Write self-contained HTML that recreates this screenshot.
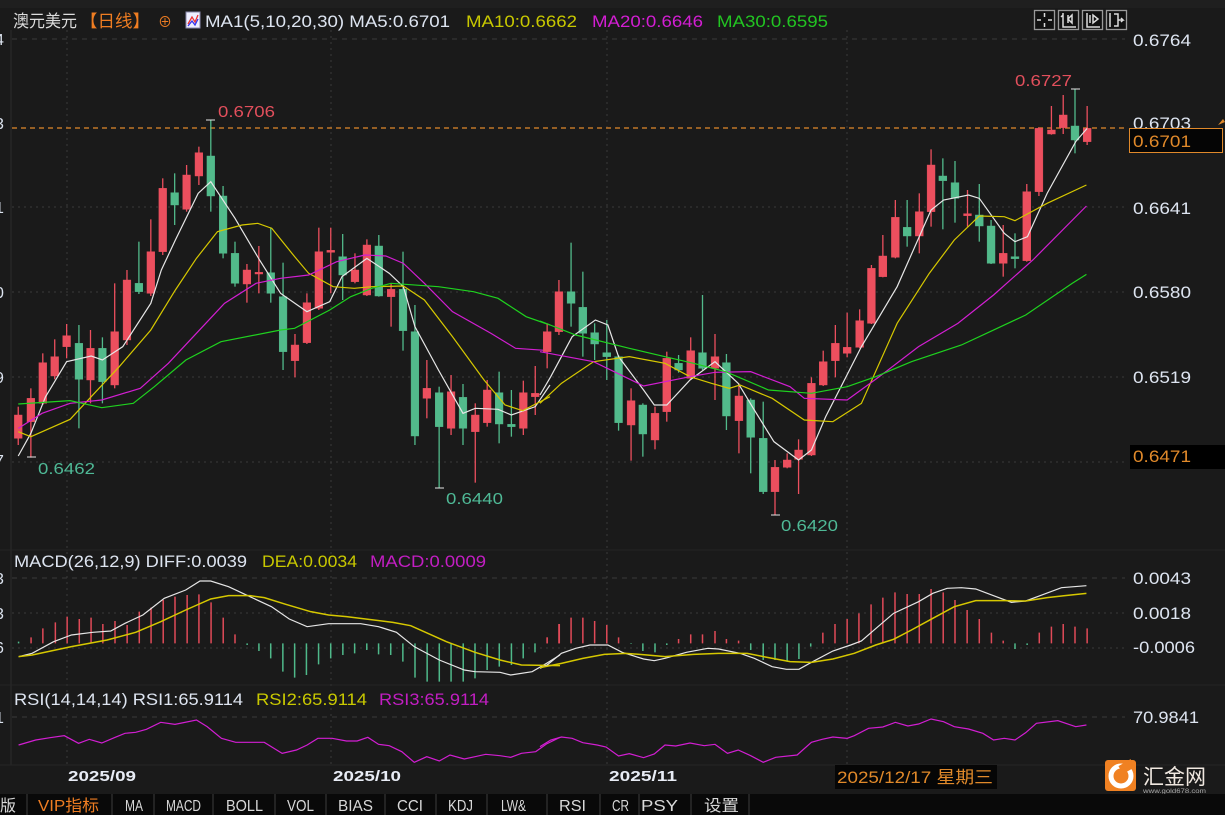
<!DOCTYPE html>
<html><head><meta charset="utf-8"><style>
html,body{margin:0;padding:0;background:#1a1a1a;width:1225px;height:815px;overflow:hidden}
svg{display:block}
text{font-family:"Liberation Sans","Noto Sans CJK SC",sans-serif}
.n{vector-effect:non-scaling-stroke}
</style></head><body>
<svg width="1225" height="815" viewBox="0 0 1225 815" xmlns="http://www.w3.org/2000/svg">
<rect width="1225" height="815" fill="#1a1a1a"/>
<rect x="0" y="0" width="1225" height="8" fill="#1f1f1f"/>
<!-- grid -->
<g stroke="#3a3a3a" stroke-dasharray="2,4" stroke-width="1">
<line x1="12" y1="39" x2="1125" y2="39" stroke-dasharray="5,5"/>
<line x1="12" y1="207" x2="1125" y2="207"/>
<line x1="12" y1="292" x2="1125" y2="292"/>
<line x1="12" y1="377" x2="1125" y2="377"/>
<line x1="12" y1="462" x2="1125" y2="462"/>
<line x1="12" y1="578" x2="1125" y2="578" stroke-dasharray="5,5"/>
<line x1="12" y1="613" x2="1125" y2="613"/>
<line x1="12" y1="648" x2="1125" y2="648"/>
<line x1="12" y1="717" x2="1125" y2="717" stroke-dasharray="5,5"/>
<line x1="67" y1="30" x2="67" y2="765"/>
<line x1="331" y1="30" x2="331" y2="765"/>
<line x1="607" y1="30" x2="607" y2="765"/>
<line x1="847" y1="30" x2="847" y2="765"/>
</g>
<line x1="11" y1="30" x2="11" y2="765" stroke="#2c2c2c"/>
<line x1="0" y1="550" x2="1225" y2="550" stroke="#242424"/>
<line x1="0" y1="685" x2="1225" y2="685" stroke="#242424"/>
<line x1="0" y1="765" x2="1225" y2="765" stroke="#262626"/>
<line x1="12" y1="128" x2="1128" y2="128" stroke="#e0892a" stroke-dasharray="5,4" stroke-width="1.3"/>

<!-- left half candles (zoom5 coords) -->
<g transform="translate(0,140) scale(0.35075,0.33333)">
<g stroke="#ec4f5e" fill="#ec4f5e" stroke-width="1.3">
<line class="n" x1="52" y1="800" x2="52" y2="915"/><rect x="41" y="825" width="22" height="70"/>
<line class="n" x1="88" y1="745" x2="88" y2="953"/><rect x="77" y="775" width="22" height="70"/>
<line class="n" x1="122" y1="640" x2="122" y2="795"/><rect x="111" y="668" width="22" height="122"/>
<line class="n" x1="156" y1="598" x2="156" y2="718"/><rect x="145" y="650" width="22" height="58"/>
<line class="n" x1="190" y1="552" x2="190" y2="655"/><rect x="179" y="587" width="22" height="33"/>
<line class="n" x1="258" y1="570" x2="258" y2="790"/><rect x="247" y="625" width="22" height="95"/>
<line class="n" x1="327" y1="430" x2="327" y2="745"/><rect x="316" y="575" width="22" height="160"/>
<line class="n" x1="362" y1="390" x2="362" y2="615"/><rect x="351" y="420" width="22" height="180"/>
<line class="n" x1="430" y1="238" x2="430" y2="468"/><rect x="419" y="335" width="22" height="125"/>
<line class="n" x1="464" y1="115" x2="464" y2="345"/><rect x="453" y="145" width="22" height="190"/>
<line class="n" x1="532" y1="75" x2="532" y2="215"/><rect x="521" y="105" width="22" height="103"/>
<line class="n" x1="567" y1="20" x2="567" y2="135"/><rect x="556" y="38" width="22" height="70"/>
<line class="n" x1="704" y1="372" x2="704" y2="488"/><rect x="693" y="390" width="22" height="42"/>
<line class="n" x1="738" y1="318" x2="738" y2="460"/><rect x="727" y="397" width="22" height="5"/>
<line class="n" x1="841" y1="582" x2="841" y2="712"/><rect x="830" y="615" width="22" height="47"/>
<line class="n" x1="875" y1="460" x2="875" y2="612"/><rect x="864" y="488" width="22" height="120"/>
<line class="n" x1="909" y1="263" x2="909" y2="510"/><rect x="898" y="335" width="22" height="170"/>
<line class="n" x1="943" y1="263" x2="943" y2="460"/><rect x="932" y="331" width="22" height="6"/>
<line class="n" x1="1012" y1="340" x2="1012" y2="430"/><rect x="1001" y="390" width="22" height="35"/>
<line class="n" x1="1046" y1="298" x2="1046" y2="468"/><rect x="1035" y="315" width="22" height="150"/>
<line class="n" x1="1115" y1="430" x2="1115" y2="560"/><rect x="1104" y="448" width="22" height="22"/>
<line class="n" x1="1217" y1="660" x2="1217" y2="835"/><rect x="1206" y="745" width="22" height="30"/>
<line class="n" x1="1286" y1="705" x2="1286" y2="885"/><rect x="1275" y="755" width="22" height="110"/>
<line class="n" x1="1355" y1="790" x2="1355" y2="1028"/><rect x="1344" y="825" width="22" height="50"/>
<line class="n" x1="1389" y1="720" x2="1389" y2="860"/><rect x="1378" y="750" width="22" height="98"/>
<line class="n" x1="1492" y1="722" x2="1492" y2="885"/><rect x="1481" y="758" width="22" height="107"/>
<line class="n" x1="1526" y1="678" x2="1526" y2="825"/><rect x="1515" y="760" width="22" height="10"/>
</g>
<g stroke="#52ba8b" fill="#52ba8b" stroke-width="1.3">
<line class="n" x1="225" y1="555" x2="225" y2="865"/><rect x="214" y="610" width="22" height="108"/>
<line class="n" x1="292" y1="592" x2="292" y2="790"/><rect x="281" y="625" width="22" height="100"/>
<line class="n" x1="396" y1="305" x2="396" y2="462"/><rect x="385" y="430" width="22" height="25"/>
<line class="n" x1="498" y1="100" x2="498" y2="255"/><rect x="487" y="158" width="22" height="37"/>
<line class="n" x1="601" y1="-60" x2="601" y2="215"/><rect x="590" y="48" width="22" height="120"/>
<line class="n" x1="636" y1="138" x2="636" y2="355"/><rect x="625" y="168" width="22" height="172"/>
<line class="n" x1="670" y1="305" x2="670" y2="440"/><rect x="659" y="340" width="22" height="90"/>
<line class="n" x1="772" y1="262" x2="772" y2="488"/><rect x="761" y="398" width="22" height="62"/>
<line class="n" x1="807" y1="368" x2="807" y2="690"/><rect x="796" y="470" width="22" height="165"/>
<line class="n" x1="977" y1="282" x2="977" y2="480"/><rect x="966" y="350" width="22" height="55"/>
<line class="n" x1="1080" y1="285" x2="1080" y2="470"/><rect x="1069" y="318" width="22" height="150"/>
<line class="n" x1="1149" y1="335" x2="1149" y2="632"/><rect x="1138" y="448" width="22" height="124"/>
<line class="n" x1="1183" y1="495" x2="1183" y2="915"/><rect x="1172" y="575" width="22" height="313"/>
<line class="n" x1="1252" y1="740" x2="1252" y2="1045"/><rect x="1241" y="758" width="22" height="102"/>
<line class="n" x1="1320" y1="732" x2="1320" y2="915"/><rect x="1309" y="772" width="22" height="93"/>
<line class="n" x1="1423" y1="695" x2="1423" y2="910"/><rect x="1412" y="758" width="22" height="94"/>
<line class="n" x1="1458" y1="750" x2="1458" y2="890"/><rect x="1447" y="853" width="22" height="7"/>
</g>
<g fill="none" stroke-width="1.2">
<polyline class="n" stroke="#e6e6e6" points="52,948 88,880 130,770 190,665 260,648 292,660 350,620 430,490 460,390 500,300 565,160 601,125 670,235 740,360 800,460 875,515 940,485 975,410 1046,355 1110,400 1150,440 1183,560 1250,690 1320,820 1355,805 1420,808 1458,825 1526,800 1568,735"/>
<polyline class="n" stroke="#d6c800" points="52,875 88,890 200,838 260,770 340,680 430,570 500,450 560,355 620,275 690,255 735,250 775,265 840,350 880,400 950,440 1010,445 1060,440 1150,438 1210,480 1290,590 1380,720 1440,795 1490,812 1568,770"/>
<polyline class="n" stroke="#d21ed2" points="52,865 120,820 200,790 290,780 400,745 480,670 560,580 640,490 730,430 800,415 880,405 960,365 1040,345 1100,348 1150,370 1210,430 1290,515 1400,580 1470,625 1568,632"/>
<polyline class="n" stroke="#1fd21f" points="52,792 200,782 290,803 380,790 440,740 530,660 630,605 800,570 840,565 940,510 1000,470 1060,445 1115,430 1250,440 1350,455 1420,475 1500,530 1568,555"/>
</g>
</g>

<!-- right half candles (zoom6 coords) -->
<g transform="translate(540,90) scale(0.35714,0.33333)">
<g stroke="#ec4f5e" fill="#ec4f5e" stroke-width="1.3">
<line class="n" x1="20" y1="700" x2="20" y2="835"/><rect x="9" y="725" width="22" height="60"/>
<line class="n" x1="53" y1="570" x2="53" y2="735"/><rect x="42" y="605" width="22" height="120"/>
<line class="n" x1="255" y1="895" x2="255" y2="1112"/><rect x="244" y="932" width="22" height="73"/>
<line class="n" x1="322" y1="950" x2="322" y2="1078"/><rect x="311" y="970" width="22" height="80"/>
<line class="n" x1="355" y1="785" x2="355" y2="995"/><rect x="344" y="805" width="22" height="160"/>
<line class="n" x1="422" y1="742" x2="422" y2="870"/><rect x="411" y="782" width="22" height="83"/>
<line class="n" x1="490" y1="732" x2="490" y2="930"/><rect x="479" y="800" width="22" height="35"/>
<line class="n" x1="557" y1="880" x2="557" y2="1090"/><rect x="546" y="918" width="22" height="74"/>
<line class="n" x1="658" y1="1110" x2="658" y2="1275"/><rect x="647" y="1132" width="22" height="73"/>
<line class="n" x1="692" y1="1090" x2="692" y2="1135"/><rect x="681" y="1110" width="22" height="22"/>
<line class="n" x1="724" y1="1048" x2="724" y2="1212"/><rect x="713" y="1080" width="22" height="28"/>
<line class="n" x1="760" y1="862" x2="760" y2="1098"/><rect x="749" y="880" width="22" height="215"/>
<line class="n" x1="793" y1="782" x2="793" y2="888"/><rect x="782" y="815" width="22" height="70"/>
<line class="n" x1="827" y1="705" x2="827" y2="862"/><rect x="816" y="760" width="22" height="52"/>
<line class="n" x1="860" y1="668" x2="860" y2="802"/><rect x="849" y="772" width="22" height="18"/>
<line class="n" x1="895" y1="658" x2="895" y2="775"/><rect x="884" y="692" width="22" height="80"/>
<line class="n" x1="928" y1="525" x2="928" y2="702"/><rect x="917" y="535" width="22" height="165"/>
<line class="n" x1="960" y1="435" x2="960" y2="562"/><rect x="949" y="498" width="22" height="62"/>
<line class="n" x1="995" y1="330" x2="995" y2="505"/><rect x="984" y="382" width="22" height="120"/>
<line class="n" x1="1062" y1="310" x2="1062" y2="490"/><rect x="1051" y="365" width="22" height="73"/>
<line class="n" x1="1095" y1="178" x2="1095" y2="410"/><rect x="1084" y="225" width="22" height="140"/>
<line class="n" x1="1197" y1="300" x2="1197" y2="410"/><rect x="1186" y="371" width="22" height="6"/>
<line class="n" x1="1297" y1="405" x2="1297" y2="560"/><rect x="1286" y="490" width="22" height="30"/>
<line class="n" x1="1363" y1="282" x2="1363" y2="515"/><rect x="1352" y="305" width="22" height="207"/>
<line class="n" x1="1397" y1="112" x2="1397" y2="318"/><rect x="1386" y="115" width="22" height="190"/>
<line class="n" x1="1432" y1="48" x2="1432" y2="134"/><rect x="1421" y="120" width="22" height="12"/>
<line class="n" x1="1465" y1="15" x2="1465" y2="132"/><rect x="1454" y="75" width="22" height="38"/>
<line class="n" x1="1532" y1="48" x2="1532" y2="165"/><rect x="1521" y="115" width="22" height="40"/>
</g>
<g stroke="#52ba8b" fill="#52ba8b" stroke-width="1.3">
<line class="n" x1="87" y1="458" x2="87" y2="710"/><rect x="76" y="605" width="22" height="35"/>
<line class="n" x1="120" y1="545" x2="120" y2="800"/><rect x="109" y="652" width="22" height="78"/>
<line class="n" x1="153" y1="700" x2="153" y2="810"/><rect x="142" y="728" width="22" height="34"/>
<line class="n" x1="187" y1="690" x2="187" y2="870"/><rect x="176" y="788" width="22" height="12"/>
<line class="n" x1="220" y1="795" x2="220" y2="1022"/><rect x="209" y="800" width="22" height="198"/>
<line class="n" x1="288" y1="940" x2="288" y2="1100"/><rect x="277" y="945" width="22" height="87"/>
<line class="n" x1="388" y1="795" x2="388" y2="848"/><rect x="377" y="820" width="22" height="20"/>
<line class="n" x1="455" y1="615" x2="455" y2="840"/><rect x="444" y="788" width="22" height="47"/>
<line class="n" x1="522" y1="792" x2="522" y2="1020"/><rect x="511" y="818" width="22" height="160"/>
<line class="n" x1="590" y1="925" x2="590" y2="1150"/><rect x="579" y="930" width="22" height="112"/>
<line class="n" x1="625" y1="935" x2="625" y2="1212"/><rect x="614" y="1045" width="22" height="160"/>
<line class="n" x1="1028" y1="330" x2="1028" y2="470"/><rect x="1017" y="412" width="22" height="26"/>
<line class="n" x1="1128" y1="205" x2="1128" y2="418"/><rect x="1117" y="258" width="22" height="14"/>
<line class="n" x1="1162" y1="213" x2="1162" y2="398"/><rect x="1151" y="278" width="22" height="47"/>
<line class="n" x1="1230" y1="282" x2="1230" y2="455"/><rect x="1219" y="375" width="22" height="33"/>
<line class="n" x1="1263" y1="390" x2="1263" y2="522"/><rect x="1252" y="408" width="22" height="112"/>
<line class="n" x1="1330" y1="430" x2="1330" y2="535"/><rect x="1319" y="500" width="22" height="6"/>
<line class="n" x1="1498" y1="-2" x2="1498" y2="190"/><rect x="1487" y="108" width="22" height="42"/>
</g>
<g fill="none" stroke-width="1.2">
<polyline class="n" stroke="#e6e6e6" points="0,915 30,860 90,740 155,690 190,705 220,800 290,900 320,945 355,945 420,870 490,815 555,880 600,960 655,1055 724,1110 760,1080 800,980 900,770 1000,590 1095,360 1130,330 1200,315 1230,325 1300,430 1330,455 1365,440 1420,310 1500,155 1532,115"/>
<polyline class="n" stroke="#d6c800" points="0,940 60,880 150,815 250,800 300,810 350,820 420,860 480,880 530,895 560,885 650,925 740,990 820,995 900,940 1000,700 1090,550 1160,450 1230,378 1300,380 1330,392 1420,340 1530,285"/>
<polyline class="n" stroke="#d21ed2" points="0,785 150,815 290,888 420,860 490,847 590,845 700,890 740,925 860,930 950,860 1060,770 1170,700 1270,615 1380,510 1530,348"/>
<polyline class="n" stroke="#1fd21f" points="0,693 100,735 250,775 350,800 430,820 520,845 640,900 760,910 860,890 940,860 1040,815 1180,765 1260,725 1360,675 1490,580 1530,553"/>
</g>
</g>

<!-- high/low marks -->
<g stroke="#e6e6e6" stroke-width="1">
<line x1="206" y1="120" x2="215" y2="120"/><line x1="1071" y1="89" x2="1080" y2="89"/>
<line x1="27" y1="457" x2="36" y2="457"/><line x1="435" y1="488" x2="444" y2="488"/><line x1="771" y1="515" x2="780" y2="515"/>
</g>
<g font-size="16" lengthAdjust="spacingAndGlyphs">
<text x="218" y="117" fill="#e24f5c" textLength="57" lengthAdjust="spacingAndGlyphs">0.6706</text>
<text x="1015" y="86" fill="#e24f5c" textLength="57" lengthAdjust="spacingAndGlyphs">0.6727</text>
<text x="38" y="474" fill="#4fb996" textLength="57" lengthAdjust="spacingAndGlyphs">0.6462</text>
<text x="446" y="504" fill="#4fb996" textLength="57" lengthAdjust="spacingAndGlyphs">0.6440</text>
<text x="781" y="531" fill="#4fb996" textLength="57" lengthAdjust="spacingAndGlyphs">0.6420</text>
</g>

<!-- MACD -->
<g transform="translate(0,545) scale(0.35714,0.33333)">
<g stroke="#e04a58" stroke-width="1.5">
<path class="n" d="M87 295V277M120 295V250M155 295V232M188 295V215M222 295V222M255 295V218M288 295V237M322 295V228M356 295V240M390 295V200M423 295V188M457 295V165M490 295V155M524 295V150M557 295V148M591 295V172M625 295V218M658 295V268M1532 295V277M1566 295V237"/>
</g>
<g stroke="#4fb98a" stroke-width="1.5">
<path class="n" d="M52 295V290M692 295V300M725 295V318M758 295V340M792 295V380M825 295V398M858 295V390M892 295V358M926 295V340M960 295V330M993 295V325M1027 295V315M1060 295V328M1094 295V330M1128 295V350M1162 295V398M1196 295V410M1230 295V410M1263 295V410M1297 295V410M1330 295V400M1364 295V375M1398 295V365M1432 295V360M1465 295V340M1498 295V322"/>
</g>
<polyline class="n" fill="none" stroke="#e6e6e6" stroke-width="1.2" points="52,335 90,325 150,290 200,270 260,262 310,258 350,235 400,210 460,160 520,135 560,108 590,108 640,125 700,155 760,185 810,222 860,245 920,236 1010,236 1060,245 1110,262 1160,305 1230,345 1300,375 1330,380 1400,382 1430,390 1490,380 1530,355 1568,330"/>
<polyline class="n" fill="none" stroke="#d6c800" stroke-width="1.5" points="52,335 90,330 200,305 300,285 380,262 450,230 520,195 590,162 640,152 700,152 740,158 800,178 870,200 920,210 970,215 1100,232 1150,242 1250,290 1330,322 1400,345 1460,360 1568,362"/>
<polyline class="n" fill="none" stroke="#d21ed2" stroke-width="1.2" points="52,600 100,585 140,578 180,572 220,595 250,583 285,594 320,578 350,565 380,562 410,553 450,532 490,538 550,525 580,545 620,580 660,592 740,592 790,625 830,615 860,600 890,580 930,580 970,588 1000,588 1030,577 1060,598 1090,602 1125,620 1160,652 1195,635 1230,648 1260,630 1300,642 1330,635 1360,628 1400,632 1430,637 1460,625 1500,620 1530,597 1568,577"/>
</g>
<g transform="translate(540,545) scale(0.35714,0.33333)">
<g stroke="#e04a58" stroke-width="1.5">
<path class="n" d="M20 295V277M53 295V237M87 295V218M120 295V218M153 295V228M187 295V240M220 295V277M388 295V282M422 295V268M455 295V268M490 295V258M522 295V282M556 295V287M792 295V263M826 295V237M860 295V222M893 295V205M927 295V178M960 295V158M994 295V142M1028 295V147M1062 295V147M1095 295V132M1129 295V142M1162 295V165M1196 295V195M1230 295V222M1264 295V263M1297 295V287M1398 295V263M1432 295V245M1465 295V237M1498 295V245M1532 295V250"/>
</g>
<g stroke="#4fb98a" stroke-width="1.5">
<path class="n" d="M255 295V297M288 295V318M322 295V322M355 295V300M590 295V315M625 295V345M658 295V345M692 295V350M725 295V342M758 295V305M1330 295V312M1364 295V300"/>
</g>
<polyline class="n" fill="none" stroke="#e6e6e6" stroke-width="1.2" points="0,370 20,360 60,325 100,310 140,300 190,300 230,322 290,342 320,347 350,340 410,322 470,310 500,312 560,325 600,340 650,365 690,373 725,373 760,352 820,318 870,300 900,288 930,260 990,205 1060,170 1100,145 1140,130 1180,128 1220,132 1270,152 1320,172 1360,168 1400,152 1460,128 1530,122"/>
<polyline class="n" fill="none" stroke="#d6c800" stroke-width="1.5" points="0,368 60,355 120,340 180,328 240,325 300,330 350,335 430,328 500,325 580,325 640,338 700,350 760,352 820,342 880,325 940,300 990,283 1040,255 1100,220 1160,185 1220,167 1300,167 1360,168 1420,158 1470,152 1530,145"/>
<polyline class="n" fill="none" stroke="#d21ed2" stroke-width="1.2" points="0,605 30,585 60,576 90,580 120,593 160,600 185,606 220,633 250,626 290,638 320,627 350,600 380,603 420,594 460,602 490,598 525,625 555,615 590,632 625,652 660,637 720,630 760,592 790,583 820,576 860,580 880,572 920,550 960,546 995,532 1030,543 1060,537 1095,522 1130,530 1160,545 1200,552 1240,565 1270,585 1300,580 1330,585 1360,563 1390,535 1450,527 1500,545 1530,540"/>
</g>

<!-- headers -->
<g font-size="17">
<text x="13" y="27" fill="#dcdcdc" textLength="64" lengthAdjust="spacingAndGlyphs">澳元美元</text>
<text x="80" y="27" fill="#ef7d22" textLength="70" lengthAdjust="spacingAndGlyphs">【日线】</text>
<text x="158" y="27" fill="#ef7d22" font-size="14">⊕</text>
<rect x="186" y="12" width="14" height="16" fill="#eef" stroke="#88a"/>
<polyline points="188,24 192,17 195,22 198,15" fill="none" stroke="#e33" stroke-width="1.3"/>
<polyline points="188,26 192,21 195,25 198,19" fill="none" stroke="#33e" stroke-width="1.3"/>
<text x="205" y="27" fill="#dde4f0" textLength="245" lengthAdjust="spacingAndGlyphs">MA1(5,10,20,30) MA5:0.6701</text>
<text x="466" y="27" fill="#c8c800" textLength="111" lengthAdjust="spacingAndGlyphs">MA10:0.6662</text>
<text x="592" y="27" fill="#d21ed2" textLength="111" lengthAdjust="spacingAndGlyphs">MA20:0.6646</text>
<text x="717" y="27" fill="#22c422" textLength="111" lengthAdjust="spacingAndGlyphs">MA30:0.6595</text>
<text x="14" y="567" fill="#dde4f0" textLength="233" lengthAdjust="spacingAndGlyphs">MACD(26,12,9) DIFF:0.0039</text>
<text x="262" y="567" fill="#c8c800" textLength="95" lengthAdjust="spacingAndGlyphs">DEA:0.0034</text>
<text x="370" y="567" fill="#c21ec2" textLength="116" lengthAdjust="spacingAndGlyphs">MACD:0.0009</text>
<text x="14" y="705" fill="#dde4f0" textLength="229" lengthAdjust="spacingAndGlyphs">RSI(14,14,14) RSI1:65.9114</text>
<text x="256" y="705" fill="#c8c800" textLength="111" lengthAdjust="spacingAndGlyphs">RSI2:65.9114</text>
<text x="379" y="705" fill="#c21ec2" textLength="110" lengthAdjust="spacingAndGlyphs">RSI3:65.9114</text>
</g>
<!-- left cut labels -->
<g font-size="16" fill="#dde4f0">
<text x="-5" y="45">4</text><text x="-5" y="129">3</text><text x="-5" y="213">1</text><text x="-5" y="298">0</text><text x="-5" y="383">9</text><text x="-5" y="466">7</text>
<text x="-5" y="584">3</text><text x="-5" y="619">3</text><text x="-5" y="653">6</text><text x="-5" y="723">1</text>
</g>
<!-- right axis -->
<g font-size="17" fill="#dde4f0">
<text x="1133" y="46" textLength="58" lengthAdjust="spacingAndGlyphs">0.6764</text>
<text x="1133" y="129" textLength="58" lengthAdjust="spacingAndGlyphs">0.6703</text>
<text x="1133" y="214" textLength="58" lengthAdjust="spacingAndGlyphs">0.6641</text>
<text x="1133" y="298" textLength="58" lengthAdjust="spacingAndGlyphs">0.6580</text>
<text x="1133" y="383" textLength="58" lengthAdjust="spacingAndGlyphs">0.6519</text>
<text x="1133" y="584" textLength="58" lengthAdjust="spacingAndGlyphs">0.0043</text>
<text x="1133" y="619" textLength="58" lengthAdjust="spacingAndGlyphs">0.0018</text>
<text x="1133" y="653" textLength="62" lengthAdjust="spacingAndGlyphs">-0.0006</text>
<text x="1133" y="723" textLength="66" lengthAdjust="spacingAndGlyphs">70.9841</text>
</g>
<rect x="1129.5" y="128.5" width="93" height="24" fill="#050505" stroke="#e0892a"/>
<text x="1133" y="147" font-size="17" fill="#e0892a" textLength="58" lengthAdjust="spacingAndGlyphs">0.6701</text>
<path d="M1218 125l5-6 2 3z" fill="#e0892a"/>
<rect x="1130" y="445" width="95" height="24" fill="#000"/>
<text x="1133" y="462" font-size="17" fill="#e0892a" textLength="58" lengthAdjust="spacingAndGlyphs">0.6471</text>
<!-- tool icons -->
<g fill="#111" stroke="#9a9a9a" stroke-width="1.3">
<rect x="1034.5" y="10.5" width="20" height="19"/><rect x="1058.5" y="10.5" width="20" height="19"/><rect x="1082.5" y="10.5" width="20" height="19"/><rect x="1106.5" y="10.5" width="20" height="19"/>
</g>
<g stroke="#dcdcdc" stroke-width="1.5" fill="none">
<path d="M1044.5 13v4M1044.5 23v4M1037 20h4M1048 20h4"/>
<path d="M1063 13v14h13M1063 15l-2 2M1068 15v8M1072 15v8l-4-4z"/>
<path d="M1087 13v14h13M1090 15v8M1093 15v8l5-4z"/>
<path d="M1110 13v14M1114 14h4v12h-4M1118 20h5l-2-2M1123 20l-2 2"/>
</g>
<!-- date axis -->
<g font-size="15" font-weight="bold" fill="#e8ecf5">
<text x="68" y="781" textLength="68" lengthAdjust="spacingAndGlyphs">2025/09</text>
<text x="333" y="781" textLength="68" lengthAdjust="spacingAndGlyphs">2025/10</text>
<text x="609" y="781" textLength="68" lengthAdjust="spacingAndGlyphs">2025/11</text>
</g>
<rect x="835" y="765" width="162" height="24" fill="#060606"/>
<text x="837" y="783" font-size="17" fill="#e0892a" textLength="156" lengthAdjust="spacingAndGlyphs">2025/12/17 星期三</text>
<!-- logo -->
<rect x="1105" y="760" width="31" height="31" rx="3" fill="#f08122"/>
<circle cx="1121" cy="776" r="10" fill="none" stroke="#fff" stroke-width="5"/>
<rect x="1120" y="762" width="14" height="9" fill="#f08122" transform="rotate(-30 1127 767)"/>
<text x="1143" y="784" font-size="21" fill="#f0e8e0" textLength="63" lengthAdjust="spacingAndGlyphs">汇金网</text>
<text x="1143" y="793" font-size="6" fill="#aaa" textLength="63" lengthAdjust="spacingAndGlyphs">www.gold678.com</text>
<!-- bottom tabs -->
<rect x="0" y="794" width="1225" height="21" fill="#090909"/>
<g stroke="#2c2c2c" stroke-width="1.5">
<path d="M27 794v21M112 794v21M154 794v21M213 794v21M275 794v21M326 794v21M385 794v21M436 794v21M487 794v21M547 794v21M600 794v21M639 794v21M691 794v21M749 794v21"/>
</g>
<g font-family="Liberation Mono, Noto Sans CJK SC, monospace" font-size="16" fill="#d8d8d8">
<text x="0" y="811">版</text>
<text x="38" y="811" fill="#ef7d22" textLength="61" lengthAdjust="spacingAndGlyphs">VIP指标</text>
<text x="125" y="811" textLength="18" lengthAdjust="spacingAndGlyphs">MA</text>
<text x="166" y="811" textLength="35" lengthAdjust="spacingAndGlyphs">MACD</text>
<text x="226" y="811" textLength="37" lengthAdjust="spacingAndGlyphs">BOLL</text>
<text x="287" y="811" textLength="27" lengthAdjust="spacingAndGlyphs">VOL</text>
<text x="338" y="811" textLength="35" lengthAdjust="spacingAndGlyphs">BIAS</text>
<text x="397" y="811" textLength="26" lengthAdjust="spacingAndGlyphs">CCI</text>
<text x="448" y="811" textLength="25" lengthAdjust="spacingAndGlyphs">KDJ</text>
<text x="501" y="811" textLength="25" lengthAdjust="spacingAndGlyphs">LW&amp;</text>
<text x="559" y="811" textLength="27" lengthAdjust="spacingAndGlyphs">RSI</text>
<text x="612" y="811" textLength="17" lengthAdjust="spacingAndGlyphs">CR</text>
<text x="641" y="811" textLength="37" lengthAdjust="spacingAndGlyphs">PSY</text>
<text x="704" y="811" textLength="35" lengthAdjust="spacingAndGlyphs">设置</text>
</g>
</svg>
</body></html>
